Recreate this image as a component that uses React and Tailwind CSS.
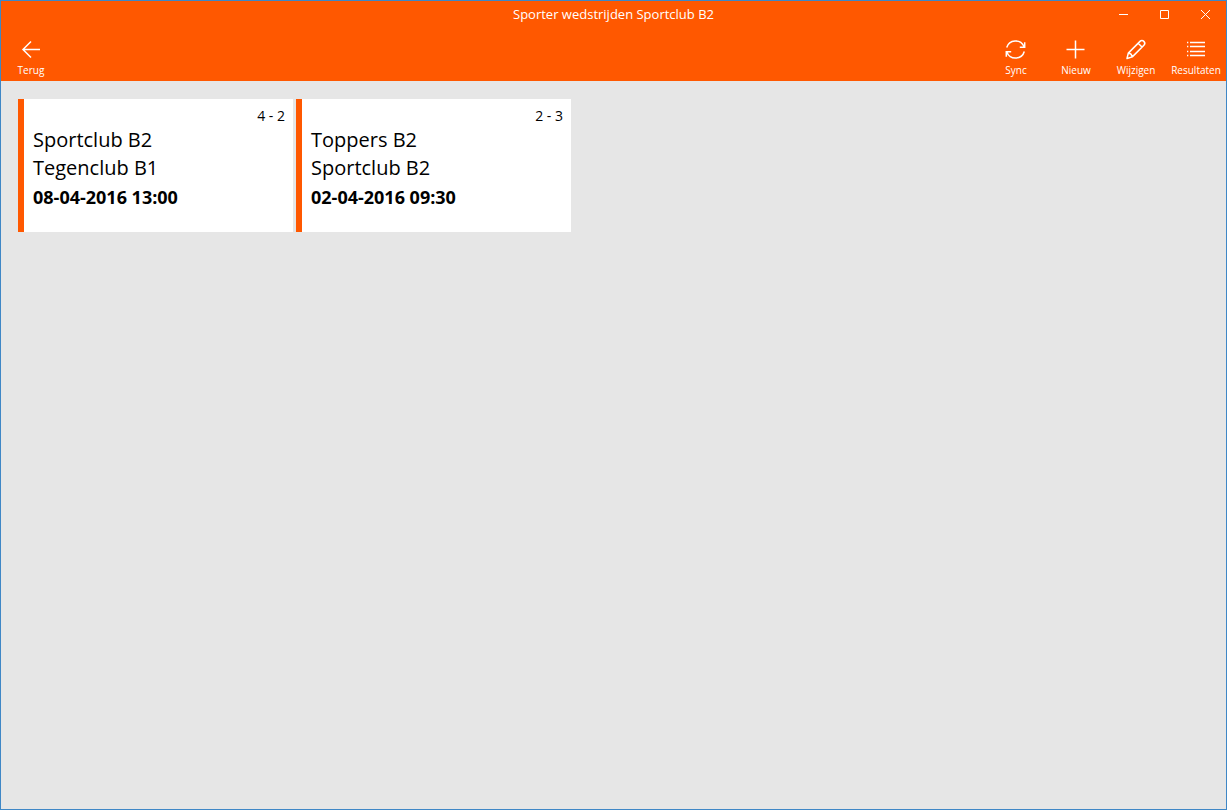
import React from 'react';

const iconClass = 'h-6 w-6 fill-none stroke-current';

function BackIcon() {
  return (
    <svg viewBox="0 0 24 24" className={iconClass} strokeWidth="1.5" aria-hidden="true">
      <path d="M21 11.5H4M12 3.5L4 11.5L12 19.5" />
    </svg>
  );
}

function SyncIcon() {
  return (
    <svg viewBox="0 0 24 24" className={iconClass} strokeWidth="1.5" aria-hidden="true">
      <path d="M2.7 9.5A9.2 9.2 0 0 1 20 8.5M20.7 4.3V9.2H15.8M20.3 13.5A9.2 9.2 0 0 1 3 14.5M2.3 18.7V13.8H7.2" />
    </svg>
  );
}

function PlusIcon() {
  return (
    <svg viewBox="0 0 24 24" className={iconClass} strokeWidth="1.5" aria-hidden="true">
      <path d="M11.5 2.5V20.5M2.5 11.5H20.5" />
    </svg>
  );
}

function PencilIcon() {
  return (
    <svg viewBox="0 0 24 24" className={iconClass} strokeWidth="1.5" strokeLinejoin="round" aria-hidden="true">
      <path d="M3 20.5L4.3 15.1L16 3.4A2.6 2.6 0 0 1 19.9 7.2L8.3 18.9L3 20.5ZM14.2 5.2L18 9M4.3 15.1Q7.6 15.5 8.3 18.9" />
    </svg>
  );
}

function ListIcon() {
  return (
    <svg viewBox="0 0 24 24" className={iconClass} strokeWidth="1.3" aria-hidden="true">
      <path d="M6 4.5H21M6 8.5H21M6 13.5H21M6 17.5H21M3 4.5H4.3M3 8.5H4.3M3 13.5H4.3M3 17.5H4.3" />
    </svg>
  );
}

function CommandButton({ label, children }) {
  return (
    <button type="button" className="flex w-15 flex-col items-center">
      {children}
      <span className="text-[10px] leading-4 whitespace-nowrap">{label}</span>
    </button>
  );
}

function WindowButton({ label, path }) {
  return (
    <button type="button" aria-label={label} className="flex w-[41px] items-center justify-center">
      <svg viewBox="0 0 11 11" className="h-[11px] w-[11px] fill-none stroke-current" strokeWidth="1" aria-hidden="true">
        <path d={path} />
      </svg>
    </button>
  );
}

const matches = [
  { home: 'Sportclub B2', away: 'Tegenclub B1', date: '08-04-2016 13:00', score: '4 - 2' },
  { home: 'Toppers B2', away: 'Sportclub B2', date: '02-04-2016 09:30', score: '2 - 3' },
];

function MatchCard({ match }) {
  return (
    <li className="h-[133px] w-[275px] border-l-6 border-[#ff5800] bg-white pt-[9px] pr-2 pl-[9px]">
      <p className="text-right text-sm leading-4">{match.score}</p>
      <h2 className="mt-0.5 text-xl leading-7">{match.home}</h2>
      <h2 className="text-xl leading-7">{match.away}</h2>
      <p className="text-lg leading-[30px] font-bold">{match.date}</p>
    </li>
  );
}

export default function App() {
  return (
    <div className="flex min-h-screen flex-col border border-[#3f87c6] bg-[#e6e6e6] font-['Open_Sans','Noto_Sans',sans-serif] text-black">
      <header className="bg-[#ff5800] text-white">
        <div className="grid h-[26px] grid-cols-[1fr_auto_1fr]">
          <h1 className="col-start-2 self-center text-[13px] leading-5">Sporter wedstrijden Sportclub B2</h1>
          <div className="flex justify-end">
            <WindowButton label="Minimaliseren" path="M1 5.5H10" />
            <WindowButton label="Maximaliseren" path="M1.5 1.5H9.5V9.5H1.5Z" />
            <WindowButton label="Sluiten" path="M1 1L10 10M10 1L1 10" />
          </div>
        </div>
        <nav className="flex items-start justify-between pt-[11px] pb-[3px]">
          <CommandButton label="Terug"><BackIcon /></CommandButton>
          <div className="flex">
            <CommandButton label="Sync"><SyncIcon /></CommandButton>
            <CommandButton label="Nieuw"><PlusIcon /></CommandButton>
            <CommandButton label="Wijzigen"><PencilIcon /></CommandButton>
            <CommandButton label="Resultaten"><ListIcon /></CommandButton>
          </div>
        </nav>
      </header>
      <main className="flex-1 px-[17px] py-[18px]">
        <ul className="flex flex-wrap gap-[3px]">
          {matches.map((match) => (
            <MatchCard key={match.date} match={match} />
          ))}
        </ul>
      </main>
    </div>
  );
}
